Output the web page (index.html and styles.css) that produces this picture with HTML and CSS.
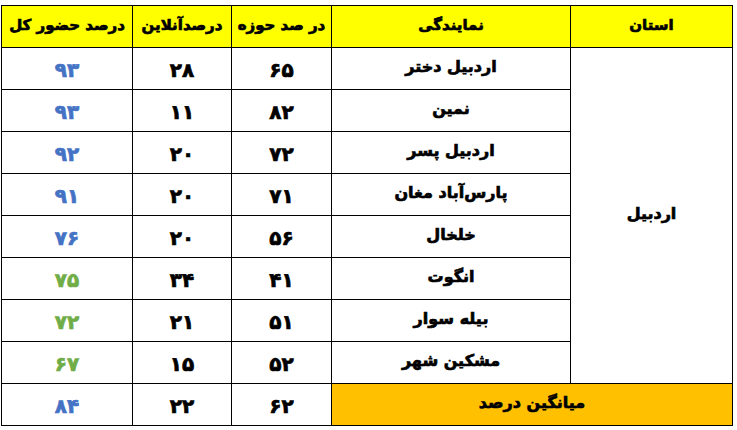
FILE: index.html
```html
<!DOCTYPE html>
<html lang="fa" dir="rtl">
<head>
<meta charset="utf-8">
<link rel="stylesheet" href="styles.css">
</head>
<body>
<div class="sheet">
<table class="grid">
  <colgroup>
    <col class="c-prov"><col class="c-rep"><col class="c-zone"><col class="c-online"><col class="c-total">
  </colgroup>
  <thead>
    <tr class="head">
      <th>استان</th><th>نمایندگی</th><th>در صد حوزه</th><th>درصدآنلاین</th><th>درصد حضور کل</th>
    </tr>
  </thead>
  <tbody>
    <tr><td class="label prov" rowspan="8">اردبیل</td><td class="label">اردبیل دختر</td><td>۶۵</td><td>۲۸</td><td class="blue">۹۳</td></tr>
    <tr><td class="label">نمین</td><td>۸۲</td><td>۱۱</td><td class="blue">۹۳</td></tr>
    <tr><td class="label">اردبیل پسر</td><td>۷۲</td><td>۲۰</td><td class="blue">۹۲</td></tr>
    <tr><td class="label">پارس‌آباد مغان</td><td>۷۱</td><td>۲۰</td><td class="blue">۹۱</td></tr>
    <tr><td class="label">خلخال</td><td>۵۶</td><td>۲۰</td><td class="blue">۷۶</td></tr>
    <tr><td class="label">انگوت</td><td>۴۱</td><td>۳۴</td><td class="green">۷۵</td></tr>
    <tr><td class="label">بیله سوار</td><td>۵۱</td><td>۲۱</td><td class="green">۷۲</td></tr>
    <tr><td class="label">مشکین شهر</td><td>۵۲</td><td>۱۵</td><td class="green">۶۷</td></tr>
    <tr><td class="label avg" colspan="2">میانگین درصد</td><td>۶۲</td><td>۲۲</td><td class="blue">۸۴</td></tr>
  </tbody>
</table>
</div>
</body>
</html>
```
FILE: styles.css
```css
html, body {
  margin: 0;
  padding: 0;
  background: #fff;
}
.sheet {
  padding: 5px 4px 0 3px;
}
.grid {
  border-collapse: collapse;
  table-layout: fixed;
  width: 731px;
  font-family: "DejaVu Sans", "Noto Sans", sans-serif;
  font-weight: bold;
  color: #000;
}
.c-prov { width: 162px; }
.c-rep { width: 239px; }
.c-zone { width: 100px; }
.c-online { width: 99px; }
.c-total { width: 131px; }
.grid th, .grid td {
  border: 1px solid #000;
  padding: 0;
  text-align: center;
  vertical-align: middle;
  line-height: 1;
  -webkit-text-stroke: 0.7px currentColor;
}
.grid td {
  font-size: 20px;
  height: 39px;
  padding-top: 2px;
}
.head th {
  background: #ffff00;
  font-size: 15px;
  height: 39px;
  padding-bottom: 2px;
}
.grid td.label {
  font-size: 16px;
  height: 38px;
  padding-top: 0;
  padding-bottom: 3px;
}
.grid td.prov {
  height: auto;
}
.avg {
  background: #ffc000;
}
.blue { color: #4472c4; }
.green { color: #70ad47; }
```
